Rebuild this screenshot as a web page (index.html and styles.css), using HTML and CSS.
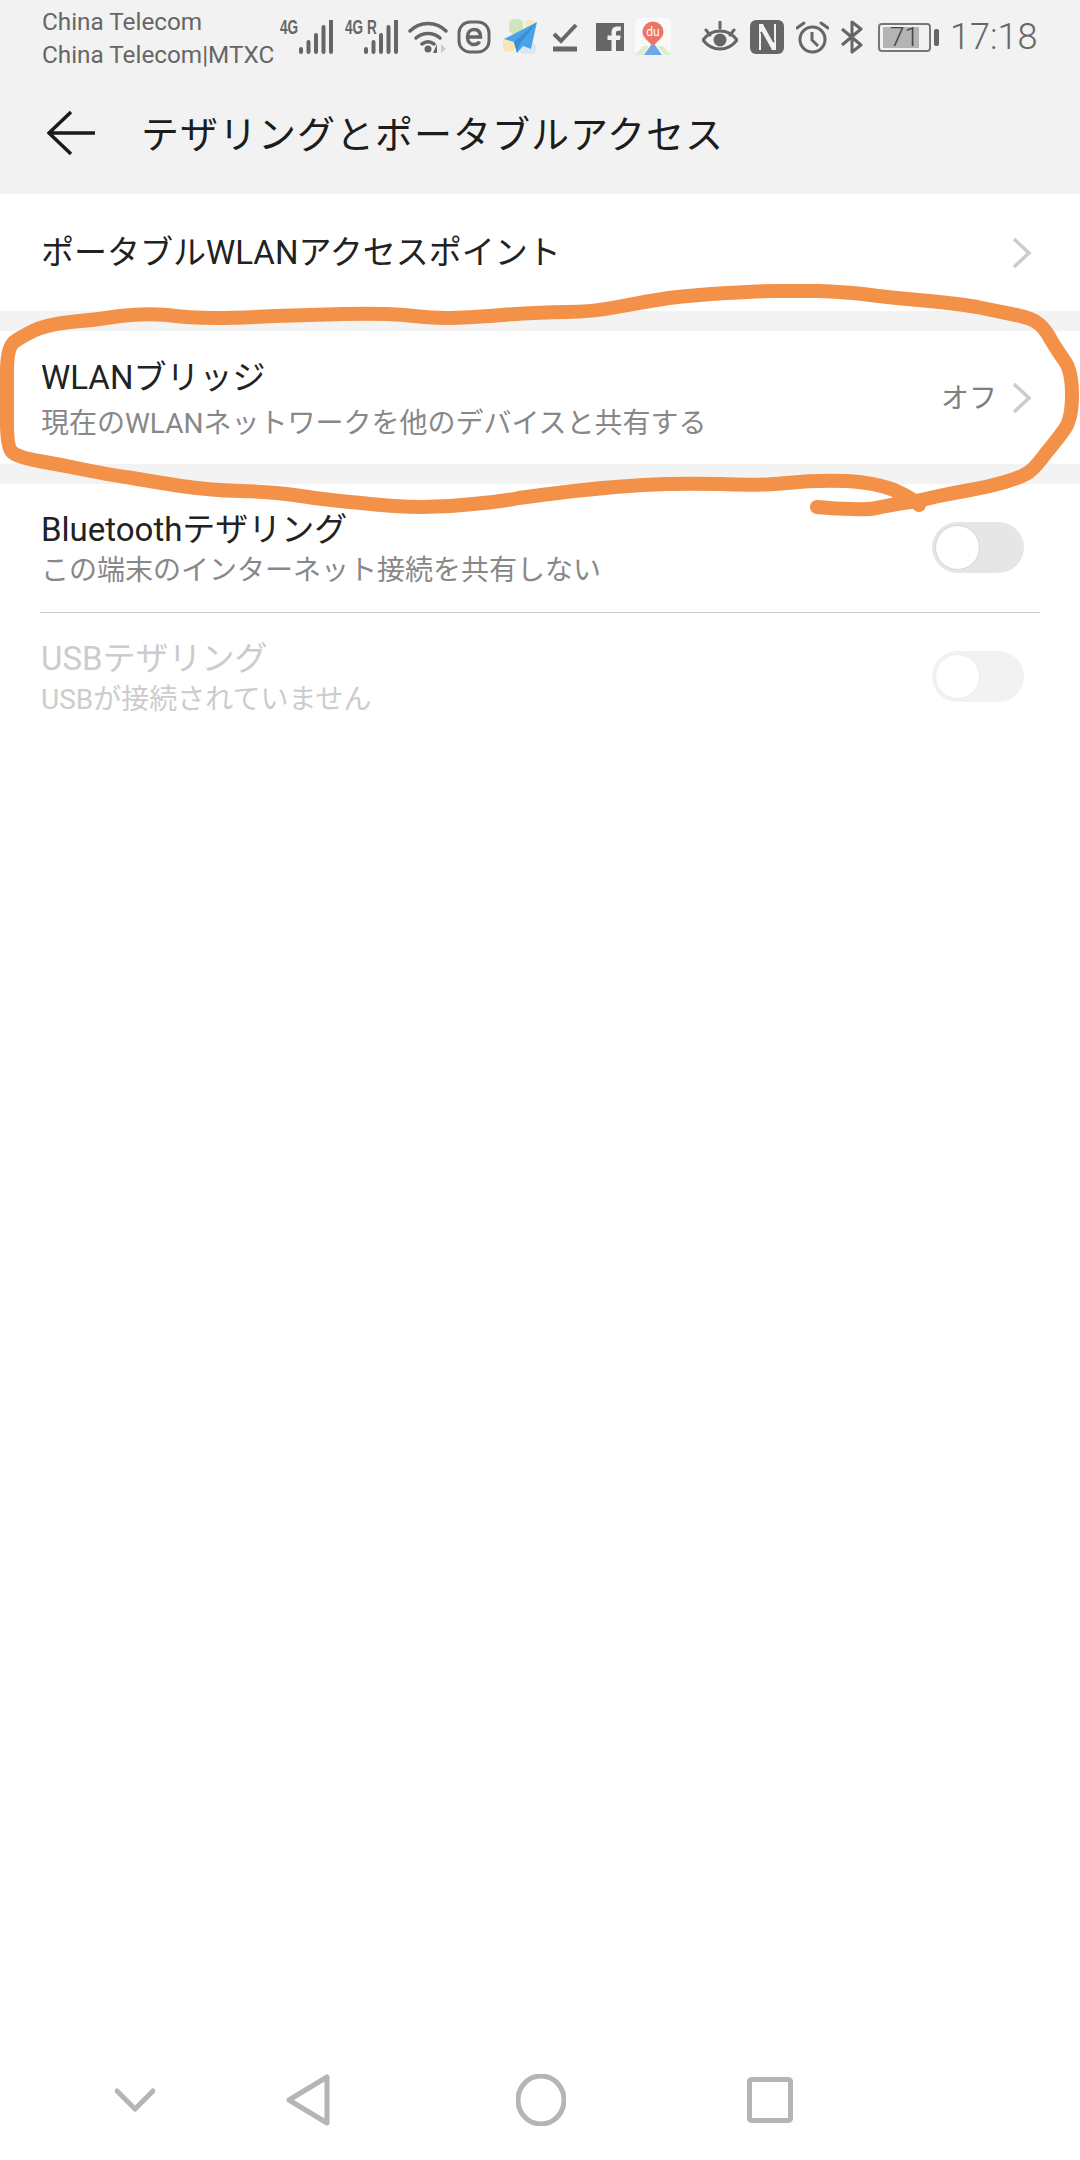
FILE: index.html
```html
<!DOCTYPE html>
<html lang="ja">
<head>
    <meta charset="UTF-8">
    <meta name="viewport" content="width=device-width, initial-scale=1.0">
    <title>テザリングとポータブルアクセス</title>
    <link rel="stylesheet" href="styles.css">
</head>
<body>
<div class="screen">
    <div class="header">
        <div class="status-bar">
            <div class="carrier">
                <div>China Telecom</div>
                <div>China Telecom|MTXC</div>
            </div>
            <div class="net">
                <span class="net-label">4G</span>
                <svg class="bars" width="36" height="34" viewBox="0 0 36 34"><path d="M3 29v3M10.500 22v10M18 15v17M25.500 7v25M33 1v31" /></svg>
            </div>
            <div class="net net-second">
                <span class="net-label">4G</span><span class="net-r">R</span>
                <svg class="bars" width="36" height="34" viewBox="0 0 36 34"><path d="M3 29v3M10.500 22v10M18 15v17M25.500 7v25M33 1v31" /></svg>
            </div>
            <svg class="icon wifi" width="40" height="34" viewBox="0 0 40 34"><path d="M2 11C12 1 28 1 38 11M8 18c7-6 17-6 24 0M14 24c4-3 8-3 12 0" fill="none" stroke="#666" stroke-width="3.500" stroke-linecap="round"/><circle cx="20" cy="29" r="3.500" fill="#666"/><path d="M29 33v-9l-4 9z" fill="#666"/><path d="M33 24l5 5-5 4z" fill="#ccc"/></svg>
            <svg class="icon e-app" width="34" height="34" viewBox="0 0 34 34"><rect x="2" y="2" width="30" height="30" rx="11" fill="none" stroke="#666" stroke-width="3"/><path d="M10.500 17h13c0-5-2.500-7.500-6.500-7.500s-6.500 3-6.500 7.500 2.500 7.500 6.500 7.500c2.500 0 4.500-1 5.500-3" fill="none" stroke="#666" stroke-width="3.500"/></svg>
            <svg class="icon plane" width="38" height="38" viewBox="0 0 38 38"><rect x="8" y="1" width="14" height="15" rx="5" fill="#cfe6bb"/><rect x="2" y="19" width="12" height="15" rx="5" fill="#f9e4b4"/><rect x="19" y="25" width="16" height="11" rx="4" fill="#d8e8f4"/><rect x="24" y="2" width="10" height="9" rx="3" fill="#fae9c0"/><path d="M36 4L3 21l10 3 3 11 6-7 8 3z" fill="#4aa3e6"/><path d="M36 4L13 24l3 11 2-8z" fill="#3b8fd0"/></svg>
            <svg class="icon check" width="26" height="30" viewBox="0 0 26 30"><path d="M2 12l7 7L24 3" fill="none" stroke="#666" stroke-width="4"/><path d="M1 27h24" stroke="#666" stroke-width="5"/></svg>
            <svg class="icon fb" width="28" height="28" viewBox="0 0 28 28"><path d="M0 0h28v28h-8V17h4l.6-4.500H20V10c0-1.500.5-2.300 2.300-2.300h2.500V3.600c-1-.1-2.300-.2-3.500-.2-3.500 0-5.800 2.100-5.800 6v3.100h-4V17h4v11H0z" fill="#666"/></svg>
            <svg class="icon map" width="36" height="38" viewBox="0 0 36 38"><rect width="36" height="36" rx="5" fill="#fafafa"/><path d="M0 37l8-9h6l-6 9zM36 37l-8-9h-6l8 9z" fill="#dcefc9"/><path d="M18 24l9 13H9z" fill="#6fa8e8"/><path d="M18 28C12 22 7.500 19 7.500 14a10.500 10.500 0 0 1 21 0c0 5-4.500 8-10.500 14z" fill="#ec7568"/><text class="map-label" x="18" y="18">du</text></svg>
            <svg class="icon eye" width="36" height="32" viewBox="0 0 36 32"><path d="M1 19c9-12 25-12 34 0-9 12-25 12-34 0z" fill="none" stroke="#666" stroke-width="3"/><circle cx="18" cy="19" r="6.500" fill="#666"/><path d="M4 9l4 5M18 1v6M32 9l-4 5" stroke="#666" stroke-width="3" stroke-linecap="round"/></svg>
            <svg class="icon nfc" width="34" height="34" viewBox="0 0 34 34"><rect width="34" height="34" rx="6" fill="#666"/><path d="M9 4h5l10 18V4h2v26h-5L11 12v18H9z" fill="#f2f2f2"/><path d="M14 4l10 18M11 12l10 18" stroke="#666" stroke-width="2"/></svg>
            <svg class="icon alarm" width="33" height="33" viewBox="0 0 33 33"><circle cx="16.500" cy="18.500" r="12.500" fill="none" stroke="#666" stroke-width="3"/><path d="M16 11v8l6 6" fill="none" stroke="#666" stroke-width="3"/><path d="M1 7l7-5M32 7l-7-5" fill="none" stroke="#666" stroke-width="3" stroke-linecap="round"/></svg>
            <svg class="icon bt" width="22" height="34" viewBox="0 0 22 34"><path d="M1 9l19 16-9 7V2l9 7L1 25" fill="none" stroke="#666" stroke-width="3" stroke-linejoin="round"/></svg>
            <div class="battery">
                <div class="battery-case"><div class="battery-fill"></div><span class="battery-level">71</span></div>
                <div class="battery-tip"></div>
            </div>
            <div class="clock">17:18</div>
        </div>
        <div class="toolbar">
            <svg class="back" width="48" height="46" viewBox="0 0 48 46"><path d="M24 2L2 23l22 21M2 23h46" fill="none" stroke="#1a1a1a" stroke-width="3.500"/></svg>
            <h1 class="page-title">テザリングとポータブルアクセス</h1>
        </div>
    </div>

    <div class="row row-single">
        <div class="row-text"><div class="row-title">ポータブルWLANアクセスポイント</div></div>
        <svg class="chevron" width="20" height="32" viewBox="0 0 20 32"><path d="M2 2l15 14L2 30" /></svg>
    </div>
    <div class="gap"></div>
    <div class="row row-bridge">
        <div class="row-text">
            <div class="row-title">WLANブリッジ</div>
            <div class="row-sub">現在のWLANネットワークを他のデバイスと共有する</div>
        </div>
        <span class="row-value">オフ</span>
        <svg class="chevron" width="20" height="32" viewBox="0 0 20 32"><path d="M2 2l15 14L2 30" /></svg>
    </div>
    <div class="gap"></div>
    <div class="row row-switch">
        <div class="row-text">
            <div class="row-title">Bluetoothテザリング</div>
            <div class="row-sub">この端末のインターネット接続を共有しない</div>
        </div>
        <div class="toggle"><div class="knob"></div></div>
    </div>
    <div class="divider"></div>
    <div class="row row-switch disabled">
        <div class="row-text">
            <div class="row-title">USBテザリング</div>
            <div class="row-sub">USBが接続されていません</div>
        </div>
        <div class="toggle"><div class="knob"></div></div>
    </div>

    <div class="nav-bar">
        <svg class="nav-chevron" width="40" height="24" viewBox="0 0 40 24"><path d="M2 3l18 18L38 3" /></svg>
        <svg class="nav-back" width="44" height="52" viewBox="0 0 44 52"><path d="M41 3v46L3 26z" /></svg>
        <svg class="nav-home" width="50" height="52" viewBox="0 0 50 52"><ellipse cx="25" cy="26" rx="23" ry="24" /></svg>
        <svg class="nav-recent" width="46" height="46" viewBox="0 0 46 46"><rect x="2.500" y="2.500" width="41" height="41" rx="2" /></svg>
    </div>

    <!-- hand drawn marker around the WLAN row -->
    <svg class="marker" width="1080" height="560" viewBox="0 0 1080 560"><path d="M817 507Q836 509 853 509Q871 510 881 507Q891 505 903 503Q915 502 934 497Q953 493 970 490Q988 487 1005 482Q1022 477 1029 472Q1036 467 1046 453Q1057 440 1064 430Q1072 420 1072 395Q1072 370 1064 360Q1057 350 1051 340Q1046 330 1039 324Q1032 318 1016 315Q1001 312 977 307Q953 303 918 300Q884 297 863 294Q843 292 819 291Q795 291 777 291Q760 291 727 293Q695 295 669 298Q643 302 617 307Q592 312 566 312Q540 312 502 315Q465 318 447 318Q430 318 404 315Q379 313 344 314Q310 315 275 316Q241 318 215 318Q189 318 167 315Q145 313 120 316Q96 320 70 322Q45 325 33 331Q21 337 14 342Q7 348 7 372Q7 397 7 422Q7 447 12 452Q17 457 39 461Q62 465 86 470Q110 475 132 478Q155 482 181 486Q207 490 241 491Q275 492 301 496Q327 500 361 503Q396 507 422 507Q448 507 473 504Q499 502 519 498Q540 495 574 491Q609 487 643 485Q678 483 719 484Q760 486 787 483Q815 480 846 481Q877 483 894 490Q912 498 919 505" /></svg>
</div>
</body>
</html>
```

FILE: styles.css
```css
html, body {
    margin: 0;
    padding: 0;
    background-color: #fff;
    font-family: Roboto, "Noto Sans CJK JP", sans-serif;
}

.screen {
    position: relative;
    width: 1080px;
    height: 2160px;
    display: flex;
    flex-direction: column;
    overflow: hidden;
}

.header {
    height: 194px;
    background-color: #f2f2f2;
}

.status-bar {
    height: 74px;
    display: flex;
    align-items: center;
    padding-left: 42px;
    color: #666;
}

.carrier {
    width: 238px;
    flex: none;
    font-size: 24.3px;
    line-height: 33px;
    white-space: nowrap;
    margin-top: 2px;
}

.net {
    position: relative;
    display: flex;
    width: 54px;
    height: 34px;
    justify-content: flex-end;
    flex: none;
}

.net-second {
    margin-left: 11px;
}

.net-label, .net-r {
    position: absolute;
    top: -2px;
    left: 0;
    font-family: "Liberation Sans", sans-serif;
    font-weight: bold;
    font-size: 20px;
    line-height: 18px;
    transform: scaleX(0.68);
    transform-origin: left top;
}

.net-r {
    left: 22px;
}

.bars path {
    fill: none;
    stroke: #666;
    stroke-width: 4;
    stroke-linecap: round;
}

.icon {
    display: block;
    flex: none;
}

.wifi { margin-left: 9px; }
.e-app { margin-left: 9px; }
.plane { margin-left: 10px; }
.check { margin-left: 13px; }
.fb { margin-left: 18px; }
.map { margin-left: 11px; }
.eye { margin-left: 31px; }
.nfc { margin-left: 12px; }
.alarm { margin-left: 12px; }
.bt { margin-left: 12px; }

.map-label {
    font-family: Roboto, sans-serif;
    font-size: 12px;
    fill: #fff;
    text-anchor: middle;
}

.battery {
    display: flex;
    align-items: center;
    margin-left: 15px;
    flex: none;
}

.battery-case {
    position: relative;
    width: 45px;
    height: 21px;
    border: 2px solid #777;
    border-radius: 4px;
    padding: 2px;
}

.battery-fill {
    width: 36px;
    height: 21px;
    margin-left: 1px;
    background-color: #b4b4b4;
}

.battery-level {
    position: absolute;
    top: 2px;
    left: 10px;
    font-size: 26px;
    font-weight: 300;
    line-height: 21px;
    color: #444;
}

.battery-tip {
    width: 5px;
    height: 17px;
    margin-left: 3px;
    background-color: #666;
    border-radius: 2px;
}

.clock {
    margin-left: 11px;
    font-size: 36px;
    font-weight: 300;
    color: #666;
    line-height: 40px;
}

.toolbar {
    height: 120px;
    display: flex;
    align-items: center;
    padding-left: 47px;
    padding-bottom: 2px;
    box-sizing: border-box;
}

.page-title {
    margin: 0 0 4px 46px;
    font-size: 38px;
    font-weight: 400;
    letter-spacing: 1px;
    color: #1c1c1c;
}

.row {
    display: flex;
    align-items: center;
    flex: none;
    padding: 0 48px 0 41px;
}

.row-single { height: 117px; }
.row-bridge { height: 133px; }
.row-switch { height: 128px; padding-right: 56px; }

.row-text {
    flex: 1;
}

.row-bridge .row-text {
    padding-top: 4px;
}

.row-switch .row-text {
    padding-top: 2px;
}

.row-title {
    font-size: 33px;
    line-height: 44px;
    color: #222;
}

.row-sub {
    font-size: 28px;
    line-height: 38px;
    color: #888;
}

.row-bridge .row-sub {
    margin-top: 5px;
}

.row-value {
    font-size: 28px;
    color: #808080;
    margin-right: 15px;
    margin-bottom: 4px;
}

.chevron path {
    fill: none;
    stroke: #ccc;
    stroke-width: 3.5;
}

.gap {
    height: 20px;
    flex: none;
    background-color: #f3f3f3;
}

.divider {
    height: 1px;
    flex: none;
    margin: 0 40px;
    background-color: #ccc;
}

.toggle {
    width: 92px;
    height: 51px;
    border-radius: 26px;
    background-color: #e6e6e6;
    padding: 3px;
    box-sizing: border-box;
    margin-top: -2px;
}

.knob {
    width: 45px;
    height: 45px;
    border-radius: 50%;
    background-color: #fff;
    border: 1px solid #d4d4d4;
    box-sizing: border-box;
}

.disabled .row-title, .disabled .row-sub {
    color: #ccc;
}

.disabled .toggle {
    background-color: #f2f2f2;
}

.disabled .knob {
    border-color: #eee;
}

.nav-bar {
    position: absolute;
    left: 0;
    right: 0;
    bottom: 0;
    height: 120px;
    display: flex;
    align-items: center;
}

.nav-bar svg {
    flex: none;
    fill: none;
    stroke: #b5b5b5;
    stroke-width: 5;
    stroke-linejoin: round;
    stroke-linecap: round;
}

.nav-chevron { margin-left: 115px; }
.nav-back { margin-left: 131px; }
.nav-home { margin-left: 186px; }
.nav-recent { margin-left: 181px; }

.marker {
    position: absolute;
    top: 0;
    left: 0;
    pointer-events: none;
}

.marker path {
    fill: none;
    stroke: #f39149;
    stroke-width: 14;
    stroke-linejoin: round;
    stroke-linecap: round;
}
```
